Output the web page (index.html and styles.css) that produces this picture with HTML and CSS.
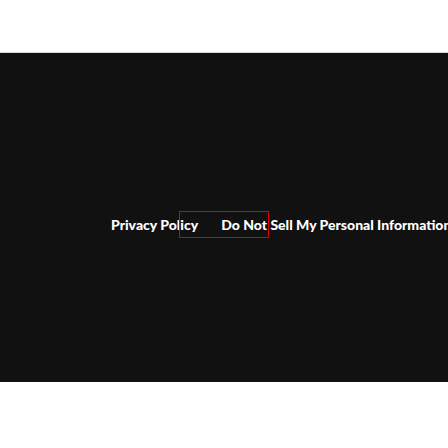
FILE: index.html
```html
<!DOCTYPE html>
<html>
<head>
<meta charset="utf-8">
<link rel="stylesheet" href="styles.css">
</head>
<body>
<header class="top"></header>
<footer class="footer">
  <nav class="links">
    <a class="link" href="#">Privacy Policy</a>
    <a class="link" href="#">Do Not Sell My Personal Information</a>
  </nav>
  <div class="focus-box"></div>
</footer>
</body>
</html>
```
FILE: styles.css
```css
html, body {
  margin: 0;
  padding: 0;
  background: #ffffff;
  overflow: hidden;
}
body {
  width: 448px;
  height: 448px;
  font-family: Lato, "Liberation Sans", sans-serif;
}
.top {
  height: 52px;
  border-bottom: 1px solid #d9d9d9;
  background: #ffffff;
}
.footer {
  position: relative;
  height: 329px;
  background: #111111;
  box-sizing: border-box;
  padding-top: 163px;
  padding-left: 111px;
  overflow: hidden;
}
.links {
  display: flex;
  gap: 23px;
  white-space: nowrap;
}
.link {
  color: #ffffff;
  font-weight: 900;
  font-size: 14px;
  line-height: 18px;
  text-decoration: none;
}
.focus-box {
  position: absolute;
  left: 179px;
  top: 158px;
  width: 88px;
  height: 25px;
  border: 1px solid #e00000;
}
```
